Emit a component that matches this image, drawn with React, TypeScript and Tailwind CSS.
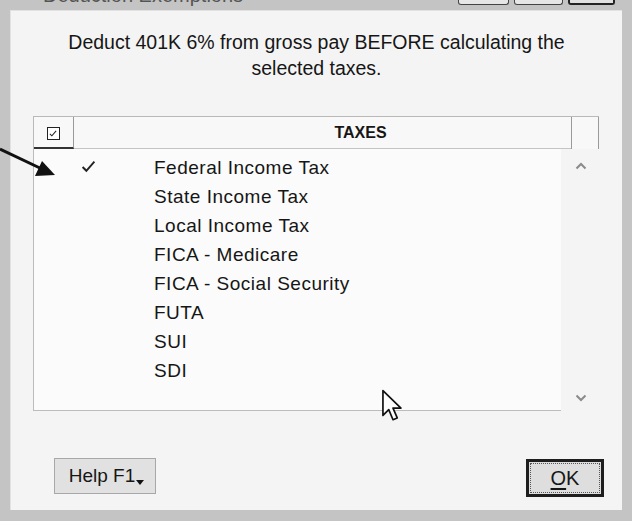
import React from "react";

const TAXES = [
  { name: "Federal Income Tax", checked: true },
  { name: "State Income Tax", checked: false },
  { name: "Local Income Tax", checked: false },
  { name: "FICA - Medicare", checked: false },
  { name: "FICA - Social Security", checked: false },
  { name: "FUTA", checked: false },
  { name: "SUI", checked: false },
  { name: "SDI", checked: false },
];

function Check({ className = "" }: { className?: string }) {
  return (
    <svg viewBox="0 0 14 12" className={className}>
      <path d="M1.5 6.5 L5 10 L12.5 1.5" fill="none" stroke="#222" strokeWidth="1.8" />
    </svg>
  );
}

function Chevron({ up }: { up?: boolean }) {
  return (
    <svg viewBox="0 0 12 8" className="w-[12px] h-[8px]">
      <polyline
        points={up ? "1.5,6.5 6,2 10.5,6.5" : "1.5,1.5 6,6 10.5,1.5"}
        fill="none"
        stroke="#8a8a8a"
        strokeWidth="2"
      />
    </svg>
  );
}

export default function App() {
  return (
    <div
      className="relative w-[632px] h-[521px] flex flex-col bg-[#c4c4c4] px-[10px] pb-[11px] overflow-hidden text-[#161616]"
      style={{ fontFamily: '"Liberation Sans", Arial, sans-serif' }}
    >
      {/* Title bar, cut off at the top */}
      <div className="h-[10px] flex items-start overflow-hidden">
        <div className="ml-[33px] -mt-[15px] text-[20px] leading-[20px] text-[#555]">
          Deduction Exemptions
        </div>
        <div className="ml-auto mr-[7px] flex gap-[5px]">
          <div className="w-[51px] h-[5px] border-x border-b border-[#444] rounded-b-[3px] bg-[#e6e6e6]" />
          <div className="w-[49px] h-[5px] border-x border-b border-[#444] rounded-b-[3px] bg-[#e6e6e6]" />
          <div className="w-[47px] h-[5px] border-x-2 border-b-2 border-[#222] rounded-b-[3px] bg-[#e0e0e0]" />
        </div>
      </div>

      {/* Client area */}
      <div className="flex-1 flex flex-col bg-[#f4f4f4] border-l border-t border-[#e2e2e2]">
        <p className="mt-[18px] text-center text-[19.5px] leading-[26px] px-[20px]">
          Deduct 401K 6% from gross pay BEFORE calculating the
          <br />
          selected taxes.
        </p>

        {/* Tax list */}
        <div className="mt-[35px] ml-[22px] w-[566px] flex flex-col">
          <div className="h-[33px] flex border-t border-l border-[#b9b9b9] bg-[#f8f8f8]">
            <div className="w-[40px] flex items-center justify-center border-r border-[#9a9a9a] border-b-2 border-b-[#333]">
              <div className="w-[13px] h-[13px] border-[1.5px] border-[#222] bg-white flex items-center justify-center mt-[3px] -ml-[1px]">
                <Check className="w-[8px] h-[7px]" />
              </div>
            </div>
            <div className="flex-1 flex items-center justify-center border-b border-[#c4c4c4] pl-[76px] text-[16px] font-bold">
              TAXES
            </div>
            <div className="w-[28px] border-x border-[#9a9a9a]" />
          </div>
          <div className="flex h-[262px]">
            <div className="w-[528px] flex flex-col pt-[5px] bg-[#fbfbfb] border-l border-b border-[#bcbcbc]">
              {TAXES.map((t) => (
                <div key={t.name} className="h-[29px] flex items-center">
                  <div className="w-[120px] pl-[47px] flex items-center">
                    {t.checked && <Check className="w-[15px] h-[13px] -mt-[4px]" />}
                  </div>
                  <span className="text-[19px] tracking-[0.5px]">{t.name}</span>
                </div>
              ))}
            </div>
            <div className="flex-1 flex flex-col items-center justify-between pt-[13px] pb-[9px] pl-[2px]">
              <Chevron up />
              <Chevron />
            </div>
          </div>
        </div>

        {/* Buttons */}
        <div className="mt-auto mb-[13px] flex items-end px-[43px] pr-[18px]">
          <button className="w-[102px] h-[36px] mb-[3px] flex items-center justify-center border border-[#a8a8a8] bg-[#e1e1e1] text-[19px] pl-[3px]">
            <span>Help F1</span>
            <svg viewBox="0 0 8 5" className="w-[8px] h-[5px] mt-[12px] ml-[1px]">
              <polygon points="0,0 8,0 4,5" fill="#111" />
            </svg>
          </button>
          <button className="ml-auto w-[78px] h-[38px] p-[2px] border-[3px] border-[#1e1e1e] bg-[#dedede]">
            <div className="w-full h-full flex items-center justify-center outline-1 outline-dotted outline-[#555] text-[20px]">
              <span>
                <span className="underline underline-offset-[3px]">O</span>K
              </span>
            </div>
          </button>
        </div>
      </div>

      {/* Annotation arrow pointing at the checked row */}
      <svg className="absolute left-0 top-[144px] w-[60px] h-[40px]" viewBox="0 0 60 40">
        <line x1="0" y1="5" x2="42" y2="25" stroke="#111" strokeWidth="3" />
        <polygon points="55,31 35,32 42,17" fill="#111" />
      </svg>

      {/* Mouse pointer */}
      <svg className="absolute left-[381px] top-[389px] w-[24px] h-[36px]" viewBox="0 0 22 34">
        <path
          d="M1.5 1.5 L1.5 25 L7 19.5 L11 29 L15 27.3 L11 18 L18.5 18 Z"
          fill="#fff"
          stroke="#111"
          strokeWidth="1.6"
          strokeLinejoin="round"
        />
      </svg>
    </div>
  );
}
